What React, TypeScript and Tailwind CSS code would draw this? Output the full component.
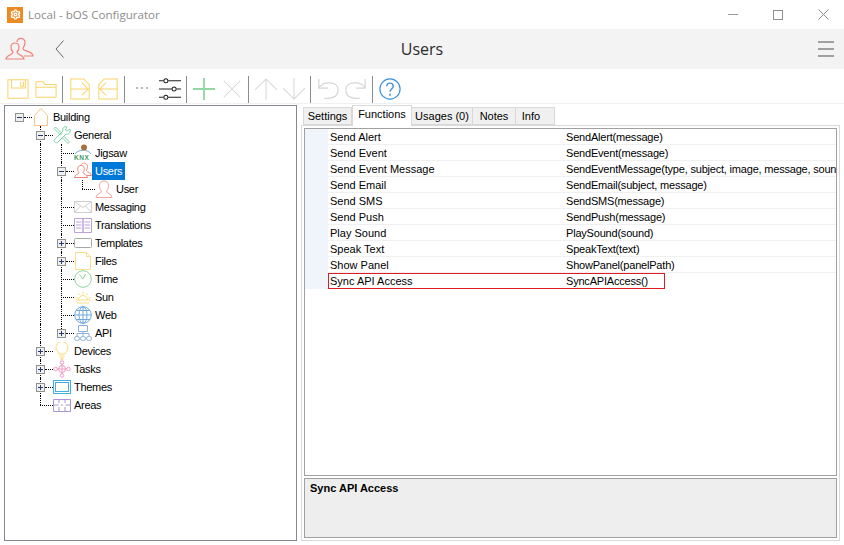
import type { ReactNode } from "react";
import { Settings } from "lucide-react";

const rows = [
  ["Send Alert", "SendAlert(message)"],
  ["Send Event", "SendEvent(message)"],
  ["Send Event Message", "SendEventMessage(type, subject, image, message, sound)"],
  ["Send Email", "SendEmail(subject, message)"],
  ["Send SMS", "SendSMS(message)"],
  ["Send Push", "SendPush(message)"],
  ["Play Sound", "PlaySound(sound)"],
  ["Speak Text", "SpeakText(text)"],
  ["Show Panel", "ShowPanel(panelPath)"],
];

const Ico = ({ c, children, s = 18 }: { c: string; children: ReactNode; s?: number }) => (
  <svg width={s} height={s} viewBox="0 0 18 18" fill="none" stroke={c} strokeWidth="1" className="shrink-0">
    {children}
  </svg>
);

const TreeIcons: Record<string, ReactNode> = {
  building: <Ico c="#f8c48a"><path d="M2.500 17.500V7.500L9 .5l6.500 7v10z" /></Ico>,
  general: <Ico c="#7fd6a8"><path d="M1 2.500L2.500 1 9 7.500 7.500 9zM10.500 10l6 6-1.500 1.500-6-6M17 3l-3 2-1.500-1L14 1c-3-1-5 1-4 4L1.500 13.500c-1 2 1 4 3 3L13 8c3 1 5-2 4-5z" /></Ico>,
  jigsaw: (
    <svg width="18" height="18" viewBox="0 0 18 18" fill="none" className="shrink-0">
      <circle cx="10" cy="3.500" r="3" fill="#a8703f" />
      <path d="M1 10c3-5 13-5 16 0" stroke="#7fa7c9" />
      <text x="0" y="16" fontSize="6.500" fontWeight="700" letterSpacing="0.600" fill="#3f9a64" fontFamily="Liberation Sans, sans-serif">KNX</text>
    </svg>
  ),
  users: <Ico c="#f0867a"><path d="M.5 15.500c0-3 4-3 4.500-5-2-2-2-7 2-7s4 5 2 7c.5 2 4.500 2 4.500 5zM7 3.500c.5-3.500 6.500-3 6.500 1 0 2-1 3-1 4 .5 2 5 2 5 5h-4.500" /></Ico>,
  user: <Ico c="#f5a79e"><path d="M1 17.500c0-4 5-3 5.500-6.500-3-3-3-10 2.500-10s5.500 7 2.500 10c.5 3.500 5.500 2.500 5.500 6.500z" /></Ico>,
  messaging: <Ico c="#cfcfcf"><path d="M.5 3.500h17v11H.5zM.5 3.500l8.500 6 8.500-6M.5 14.500l6-6.500M17.500 14.500l-6-6.500" /></Ico>,
  translations: <Ico c="#bda2dc"><path d="M.5 2.500h8.500v14H.5zM9 2.500h8.500v14H9zM2 6h5.500M2 9h5.500M2 12h5.500M10.500 6H16M10.500 9H16M10.500 12H16" /></Ico>,
  templates: <Ico c="#a9a9a9"><rect x=".5" y="4.500" width="17" height="9" rx="1" /></Ico>,
  files: <Ico c="#fbdc8e"><path d="M1.500.5h11l4 4v13h-15zM12.500.5v4h4" /></Ico>,
  time: <Ico c="#8fd39c"><circle cx="9" cy="9" r="8.300" /><path d="M5.500 4.500L9 9l2.500-5" /></Ico>,
  sun: <Ico c="#f9dc7e"><path d="M4.500 12a4.500 4.500 0 019 0M1 12h16M3 15h12M9 3.500V6M4.500 5.500l1.500 1.500M13.500 5.500L12 7M1.500 9.500l2 .5M16.500 9.500l-2 .5" /></Ico>,
  web: <Ico c="#6ea7dc"><circle cx="9" cy="9" r="8.300" /><ellipse cx="9" cy="9" rx="4" ry="8.300" /><path d="M9 .7v16.600M.7 9h16.600M2 4.500h14M2 13.500h14" /></Ico>,
  api: <Ico c="#8aaedd"><path d="M4.500 1.500h9v6h-9zM9 7.500v2M3 12V9.500h12V12M9 9.500V12" /><rect x=".5" y="12.500" width="5" height="4" rx="2" /><rect x="6.500" y="12.500" width="5" height="4" rx="2" /><rect x="12.500" y="12.500" width="5" height="4" rx="2" /></Ico>,
  devices: <Ico c="#fbd873"><path d="M6 12c0-2-3-3-3-6.500a6 6 0 0112 0C15 9 12 10 12 12zM6.500 14h5M7 16h4M8 17.500h2" /></Ico>,
  tasks: <Ico c="#f29ac2"><circle cx="9" cy="9" r="3.500" /><circle cx="9" cy="2.500" r="1.800" /><circle cx="9" cy="15.500" r="1.800" /><circle cx="2.500" cy="9" r="1.800" /><circle cx="15.500" cy="9" r="1.800" /><path d="M4.300 9h9.400M9 4.300v9.400" /></Ico>,
  themes: <Ico c="#43ade6"><rect x=".5" y="2.500" width="17" height="13" /><rect x="2.500" y="4.500" width="13" height="9" /></Ico>,
  areas: <Ico c="#a897d2"><path d="M.5 3.500h17v12H.5zM.5 9h5M8 9h2M12.500 9h5M6 3.500V7M6 11v4.500M12 3.500V7M12 11v4.500" /></Ico>,
};

const Expander = ({ open }: { open: boolean }) => (
  <span className="relative z-10 flex h-[9px] w-[9px] items-center justify-center border border-[#919191] bg-[#f0f0f0]">
    <span className="absolute h-px w-[5px] bg-[#2a3a6e]" />
    {!open && <span className="absolute h-[5px] w-px bg-[#2a3a6e]" />}
  </span>
);

type Node = { label: string; icon: string; depth: number; exp?: "open" | "closed"; selected?: boolean };

const tree: Node[] = [
  { label: "Building", icon: "building", depth: 0, exp: "open" },
  { label: "General", icon: "general", depth: 1, exp: "open" },
  { label: "Jigsaw", icon: "jigsaw", depth: 2 },
  { label: "Users", icon: "users", depth: 2, exp: "open", selected: true },
  { label: "User", icon: "user", depth: 3 },
  { label: "Messaging", icon: "messaging", depth: 2 },
  { label: "Translations", icon: "translations", depth: 2 },
  { label: "Templates", icon: "templates", depth: 2, exp: "closed" },
  { label: "Files", icon: "files", depth: 2, exp: "closed" },
  { label: "Time", icon: "time", depth: 2 },
  { label: "Sun", icon: "sun", depth: 2 },
  { label: "Web", icon: "web", depth: 2 },
  { label: "API", icon: "api", depth: 2, exp: "closed" },
  { label: "Devices", icon: "devices", depth: 1, exp: "closed" },
  { label: "Tasks", icon: "tasks", depth: 1, exp: "closed" },
  { label: "Themes", icon: "themes", depth: 1, exp: "closed" },
  { label: "Areas", icon: "areas", depth: 1 },
];

// Indent per depth, so the expander sits on the dotted guide of its level.
const indent = ["pl-[10px]", "pl-[31px]", "pl-[52px]", "pl-[73px]"];

const TreeRow = ({ node, i }: { node: Node; i: number }) => (
  <div className={`relative flex h-[18px] items-center ${indent[node.depth]}`}>
    {/* dotted guides running down behind the rows */}
    {i >= 1 && i <= 15 && <span className="absolute inset-y-0 left-[35px] border-l border-dotted border-black" />}
    {i === 16 && <span className="absolute top-0 h-[9px] left-[35px] border-l border-dotted border-black" />}
    {i >= 2 && i <= 11 && <span className="absolute inset-y-0 left-[56px] border-l border-dotted border-black" />}
    {i === 12 && <span className="absolute top-0 h-[9px] left-[56px] border-l border-dotted border-black" />}
    {i === 4 && <span className="absolute top-0 h-[9px] left-[77px] border-l border-dotted border-black" />}
    {node.exp ? (
      <>
        <Expander open={node.exp === "open"} />
        <span className="h-0 w-[8px] border-t border-dotted border-black" />
      </>
    ) : (
      <span className="ml-[4px] h-0 w-[13px] border-t border-dotted border-black" />
    )}
    <span className="flex">{TreeIcons[node.icon]}</span>
    <span
      className={`px-[3px] leading-[18px] tracking-[-0.3px] ${node.selected ? "bg-[#0078d7] text-white" : "text-black"}`}
    >
      {node.label}
    </span>
  </div>
);

const Sep = () => <span className="ml-[2px] mr-[3px] h-[27px] w-px bg-[#8c8c8c]" />;

const Bar = ({ children }: { children: ReactNode }) => (
  <span className="flex w-[28px] shrink-0 justify-center">
    <svg width="22" height="22" viewBox="0 0 24 24" fill="none" strokeWidth="1.100">
      {children}
    </svg>
  </span>
);

const Toolbar = () => (
  <div className="flex h-[35px] items-center border-b border-[#f0f0f0] pl-[4px] pt-[6px]">
    <Bar><g stroke="#fbd36b"><path d="M1 2h22v20H1zM5 2v9h15V2M15 4v5h3V4" /></g></Bar>
    <Bar><g stroke="#fbd36b"><path d="M1 21V4h8l2 3h12v14zM1 10h22" /></g></Bar>
    <Sep />
    <Bar><g stroke="#fbd36b"><path d="M2 1h14l6 6v16H2zM2 12h19M14 5l7 7-7 7" /></g></Bar>
    <Bar><g stroke="#fbd36b"><path d="M2 7l6-6h14v22H2zM22 12H3M10 5l-7 7 7 7" /></g></Bar>
    <Sep />
    <Bar><g fill="#444"><circle cx="6.500" cy="11" r=".8" /><circle cx="12" cy="11" r=".8" /><circle cx="17.500" cy="11" r=".8" /></g></Bar>
    <Bar><g stroke="#222"><path d="M0 3h5M10 3h14M0 12h14M19 12h5M0 21h5M10 21h14" /><circle cx="7.500" cy="3" r="2.200" /><circle cx="16.500" cy="12" r="2.200" /><circle cx="7.500" cy="21" r="2.200" /></g></Bar>
    <Sep />
    <Bar><path d="M12 0v24M0 12h24" stroke="#93d7a3" strokeWidth="2" /></Bar>
    <Bar><path d="M3 3l18 18M21 3L3 21" stroke="#d6d6d6" /></Bar>
    <Sep />
    <Bar><path d="M12 24V1M0 13L12 1l12 12" stroke="#d6d6d6" /></Bar>
    <Bar><path d="M12 0v23M0 11l12 12 12-12" stroke="#d6d6d6" /></Bar>
    <Sep />
    <Bar><path d="M2 1v10h10M2 11C6 3 23 3 23 13c0 8-8 10-15 9" stroke="#d6d6d6" strokeWidth="1.300" /></Bar>
    <Bar><path d="M22 1v10H12M22 11C18 3 1 3 1 13c0 8 8 10 15 9" stroke="#d6d6d6" strokeWidth="1.300" /></Bar>
    <Sep />
    <Bar>
      <circle cx="12" cy="12" r="11" stroke="#3f92dc" strokeWidth="1.300" />
      <path d="M8.500 9c0-4.500 7-4.500 7 0 0 3-3.500 3-3.500 6M12 17v2.500" stroke="#3f92dc" strokeWidth="1.500" />
    </Bar>
  </div>
);

const tabs = [
  { label: "Settings", w: "w-[49px]" },
  { label: "Functions", w: "w-[60px]" },
  { label: "Usages (0)", w: "w-[61px]" },
  { label: "Notes", w: "w-[43px]" },
  { label: "Info", w: "w-[39px] pr-[8px]" },
];

export default function App() {
  return (
    <div className="flex h-[545px] w-[844px] flex-col overflow-hidden bg-white font-['Liberation_Sans',sans-serif] text-[11px]">
      {/* Title bar */}
      <div className="flex h-[29px] items-center pl-[7px]">
        <span className="flex h-4 w-4 items-center justify-center bg-[#ee8a23]">
          <Settings size={11} color="white" strokeWidth={3} />
        </span>
        <span className="ml-[5px] font-['Open_Sans',sans-serif] text-[11.6px] text-[#8c8c8c]">Local - bOS Configurator</span>
        <div className="ml-auto flex items-center gap-[35px] pr-[15px]">
          <span className="h-px w-[10px] bg-[#999]" />
          <span className="h-[10px] w-[10px] border border-[#8f8f8f]" />
          <svg width="11" height="11" viewBox="0 0 11 11" stroke="#8f8f8f"><path d="M.5.5l10 10M10.500.5l-10 10" /></svg>
        </div>
      </div>

      {/* Header */}
      <div className="flex h-[40px] items-center bg-[#f3f3f3] pl-[5px] pr-[10px]">
        <svg width="29" height="24" viewBox="0 0 29 24" fill="none" stroke="#ef8275" strokeWidth="1.200">
          <path d="M1 22c0-4 7-4 7-7-3-3-3-9 2-9s5 6 2 9c0 3 7 3 7 7zM12 5c0-5 8-5 8 1 0 3-2 4-2 6 0 2 10 2 10 7h-9" />
        </svg>
        <svg className="ml-[21px]" width="9" height="18" viewBox="0 0 9 18" fill="none" stroke="#666"><path d="M8.500.5L1 9l7.500 8.500" /></svg>
        <span className="flex-1 pr-[38px] text-center font-['Open_Sans',sans-serif] text-[16px] text-[#2b2b2b]">Users</span>
        <span className="flex flex-col gap-[5px]">
          <span className="h-[2px] w-4 bg-[#a0a0a0]" />
          <span className="h-[2px] w-4 bg-[#a0a0a0]" />
          <span className="h-[2px] w-4 bg-[#a0a0a0]" />
        </span>
      </div>

      <Toolbar />

      {/* Body */}
      <div className="flex min-h-0 flex-1 pb-[4px] pl-[4px] pr-[4px] pt-[1px]">
        {/* Tree */}
        <div className="w-[293px] shrink-0 border border-[#828790] pt-[2px]">
          {tree.map((n, i) => (
            <TreeRow key={n.label} node={n} i={i} />
          ))}
        </div>

        {/* Tabs */}
        <div className="ml-[4px] flex min-w-0 flex-1 flex-col">
          <div className="flex h-[20px] items-end pl-[2px]">
            {tabs.map((t) => (
              <span
                key={t.label}
                className={
                  t.label === "Functions"
                    ? `-mb-px z-10 flex h-[21px] items-center justify-center border border-b-0 border-[#d9d9d9] bg-white pb-[3px] ${t.w}`
                    : `flex h-[18px] items-center justify-center border border-l-0 border-[#d9d9d9] bg-[#f0f0f0] first:border-l ${t.w}`
                }
              >
                {t.label}
              </span>
            ))}
          </div>
          <div className="flex min-h-0 flex-1 flex-col gap-[2px] border border-[#d9d9d9] p-[2px]">
            <div className="min-h-0 flex-1 overflow-hidden border border-[#a0a0a0] bg-white">
              {rows.map(([name, fn]) => (
                <div key={name} className="flex h-[16px] leading-none text-black">
                  <span className="w-[23px] shrink-0 bg-[#f0f5fb]" />
                  <div className="flex min-w-0 flex-1 items-center border-b border-[#f0f0f0] pt-[2px]">
                    <span className="w-[238px] shrink-0 pl-[2px]">{name}</span>
                    <span className="whitespace-nowrap tracking-[-0.2px]">{fn}</span>
                  </div>
                </div>
              ))}
              <div className="flex h-[16px] leading-none text-black">
                <span className="w-[23px] shrink-0 bg-[#f0f5fb]" />
                <div className="flex w-[337px] items-center border border-[#e01b24]">
                  <span className="w-[237px] shrink-0 pl-[1px]">Sync API Access</span>
                  <span className="tracking-[-0.2px]">SyncAPIAccess()</span>
                </div>
              </div>
            </div>
            <div className="h-[60px] shrink-0 border border-[#a0a0a0] bg-[#eeeeee] px-[5px] pt-[1px] font-bold text-black">
              Sync API Access
            </div>
          </div>
        </div>
      </div>
    </div>
  );
}
